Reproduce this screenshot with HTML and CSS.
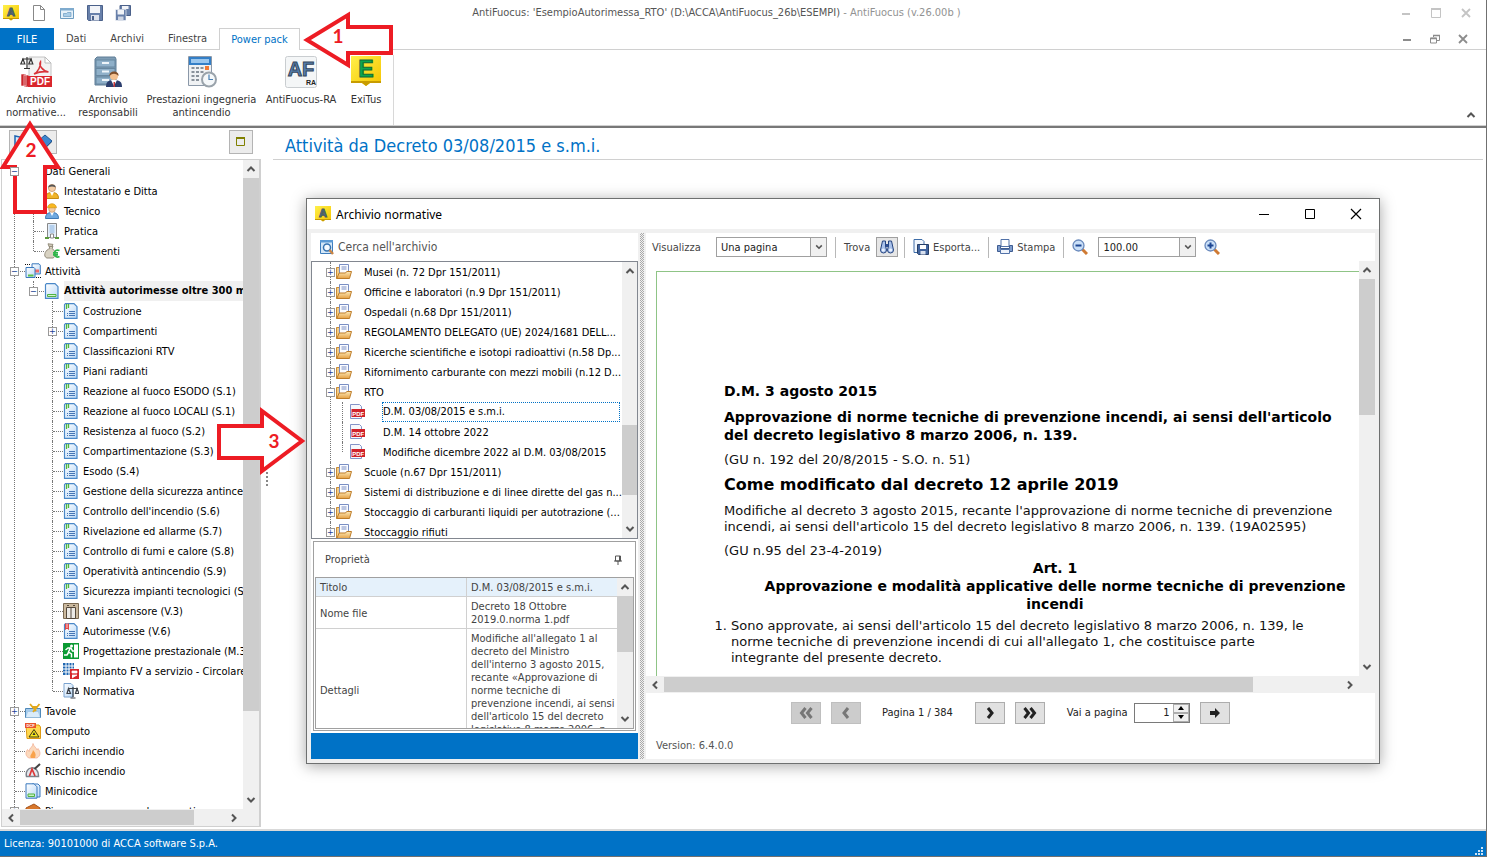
FILE: index.html
```html
<!DOCTYPE html>
<html lang="it">
<head>
<meta charset="utf-8">
<title>AntiFuocus</title>
<meta name="viewport" content="width=device-width, initial-scale=1">
<link rel="stylesheet" href="styles.css">
</head>
<body>
<svg class="defs" aria-hidden="true">
  <defs>
    <linearGradient id="gy" x1="0" y1="0" x2="1" y2="1"><stop offset="0" stop-color="#fff04a"/><stop offset="1" stop-color="#f5c400"/></linearGradient>
    <linearGradient id="gb" x1="0" y1="0" x2="1" y2="1"><stop offset="0" stop-color="#ffffff"/><stop offset="1" stop-color="#b9d8f7"/></linearGradient>
    <linearGradient id="gf" x1="0" y1="0" x2="0" y2="1"><stop offset="0" stop-color="#fdeab8"/><stop offset="1" stop-color="#e5a144"/></linearGradient>
  </defs>
  <symbol id="up" viewBox="0 0 10 10"><path d="M1.5 7 5 3.5 8.500 7" fill="none" stroke="#555" stroke-width="2"/></symbol>
  <symbol id="down" viewBox="0 0 10 10"><path d="M1.500 3 5 6.500 8.500 3" fill="none" stroke="#555" stroke-width="2"/></symbol>
  <symbol id="left" viewBox="0 0 10 10"><path d="M7 1.500 3.500 5 7 8.500" fill="none" stroke="#555" stroke-width="2"/></symbol>
  <symbol id="right" viewBox="0 0 10 10"><path d="M3 1.500 6.500 5 3 8.500" fill="none" stroke="#555" stroke-width="2"/></symbol>
  <symbol id="logo" viewBox="0 0 16 16"><path d="M0 0h16v14H10l-2 1.500L6 14H0z" fill="url(#gy)"/><path d="M0 14h6l2 1.500L10 14h6v-1H0z" fill="#c79a00"/><text x="8" y="11" class="la">A</text></symbol>
  <symbol id="newfile" viewBox="0 0 16 16"><path d="M2.500.5h7l4 4v11h-11zM9.500.5v4h4" fill="#fff" stroke="#888"/></symbol>
  <symbol id="openwin" viewBox="0 0 16 16"><path d="M1.500 3.500h13v10h-13z" fill="#e6f1f9" stroke="#6d9cc0"/><path d="M1 3h14v2.500H1z" fill="#7fabce"/><path d="M4.500 11.500v-3h3l1-1h3.500v4z" fill="#a8cde8" stroke="#6d9cc0" stroke-width=".7"/></symbol>
  <symbol id="save" viewBox="0 0 16 16"><path d="M.5.5h15v15h-14l-1-1z" fill="#6880aa" stroke="#4b618a"/><path d="M3 1h10v7H3z" fill="#f2f4f8"/><path d="M4 10h8v5.500H4z" fill="#dde2ec"/><path d="M5 11h2v4H5z" fill="#4b618a"/></symbol>
  <symbol id="saveall" viewBox="0 0 16 16"><path d="M5 .5h10.500v10H5z" fill="#6880aa" stroke="#4b618a"/><path d="M7 1h6.500v3H7z" fill="#f2f4f8"/><path d="M.5 4.500H11v11H.5z" fill="#6880aa" stroke="#fff" stroke-width=".6"/><path d="M2.500 5h6.500v4.500H2.500z" fill="#f2f4f8"/><path d="M3 11.500h5.500v4H3z" fill="#cfd6e4"/></symbol>
  <symbol id="user" viewBox="0 0 16 16"><path d="M1.500 15.500c0-4 2-6 6.500-6s6.500 2 6.500 6z" fill="#f0b429" stroke="#c68a12"/><path d="M6 9l2 4 2-4z" fill="#fff"/><circle cx="8" cy="5" r="3.600" fill="#f3cda6" stroke="#b98252" stroke-width=".6"/><path d="M4.300 4.500C4 .5 12 .5 11.700 4.500 9 3 7 3 4.300 4.500z" fill="#555"/></symbol>
  <symbol id="worker" viewBox="0 0 16 16"><path d="M1.500 15.500c0-4 2-6 6.500-6s6.500 2 6.500 6z" fill="#6fa9e0" stroke="#3f79b5"/><path d="M6 9l2 4 2-4z" fill="#fff"/><circle cx="8" cy="6" r="3.300" fill="#f3cda6" stroke="#b98252" stroke-width=".6"/><path d="M3.500 4.800C4-.7 12-.7 12.500 4.800z" fill="#f8b820" stroke="#c98d0c" stroke-width=".6"/></symbol>
  <symbol id="building" viewBox="0 0 16 16"><path d="M3.500.5h9v14h-9z" fill="#e3eefa" stroke="#888"/><path d="M5.500 3h5M5.500 5h5M5.500 7h5M5.500 9h5" stroke="#88b2df"/><path d="M6.500 15v-4h3v4z" fill="#fff" stroke="#888"/><path d="M1 15h4M11 15h4" stroke="#5a9a3c" stroke-width="2"/></symbol>
  <symbol id="money" viewBox="0 0 16 16"><path d="M5 3.500h4L8 5.500c4 2 4 8.500 1 9.500H3c-4-1-2.500-8 3-9.500zM4 .8l5 .6-1 2H5z" fill="#d8d2c2" stroke="#938d7c"/><path d="M15.500 7.500c-3.500-1.500-5 1-5 3.200s2 4.300 5 2.800M9 9.800h5M9 11.800h5" fill="none" stroke="#2fb54a" stroke-width="1.700"/></symbol>
  <symbol id="multidoc" viewBox="0 0 16 16"><path d="M7 .8h7l1.300 1.400V11H7z" fill="url(#gb)" stroke="#3a79be"/><path d="M10 8h4" stroke="#f06a6a" stroke-width="3"/><path d="M1 4.500h8l1 1.200V14.500H1z" fill="url(#gb)" stroke="#3a79be"/><path d="M3 12.500h5.500" stroke="#5bc04b" stroke-width="2"/><path d="M0 1.500h6M11 14.500h5" stroke="#111" stroke-dasharray="1 1"/></symbol>
  <symbol id="greendoc" viewBox="0 0 16 16"><path d="M2.500.7h8.500l3 3v11.600H1.500V1.700z" fill="url(#gb)" stroke="#4a88c8" stroke-width="1.200"/><path d="M3.500 11.500h8.500v2H3.500z" fill="#d5f3ce" stroke="#4fb242"/></symbol>
  <symbol id="doc" viewBox="0 0 16 16"><path d="M2.500.7h8.500l3 3v11.600H1.500V1.700z" fill="url(#gb)" stroke="#4a88c8" stroke-width="1.200"/><path d="M6 8.500h6M6 10.500h6M6 12.500h6" stroke="#3569ad" stroke-width=".9"/><path d="M4 10.500h1M4 12.500h1" stroke="#3569ad" stroke-width=".9"/><path d="M3.500 1v5M5.500 1v4" stroke="#50b83c" stroke-width="1.300"/></symbol>
  <symbol id="reddoc" viewBox="0 0 16 16"><path d="M2.500.7h8.500l3 3v11.600H1.500V1.700z" fill="url(#gb)" stroke="#4a88c8" stroke-width="1.200"/><path d="M6 8.500h6M6 10.500h6M6 12.500h6M4 10.500h1M4 12.500h1" stroke="#3569ad" stroke-width=".9"/><path d="M2.500.5v6l1.500-1.500 1.500 1.500v-6" fill="#f58d8d" stroke="#e04848"/></symbol>
  <symbol id="lift" viewBox="0 0 16 16"><path d="M.5.5h15v15H.5z" fill="#cbb99e" stroke="#7b6a52"/><path d="M3.500 4.500h9v11h-9zM8 4.500v11" fill="#eceae6" stroke="#54493c"/><path d="M4 2.500h2M10 2.500h2" stroke="#54493c"/></symbol>
  <symbol id="exit" viewBox="0 0 16 16"><path d="M0 0h16v16H0z" fill="#0b9a33"/><path d="M11 1.500h4v13h-4z" fill="#fff"/><circle cx="8.500" cy="3" r="1.500" fill="#fff"/><path d="M2.500 7l2.500-2h3l1.500 3h2M7 5.500 5.500 9l3 2v3.500M5.500 9.500 4 12H1" fill="none" stroke="#fff" stroke-width="1.500"/></symbol>
  <symbol id="solar" viewBox="0 0 16 16"><path d="M0 0h11v12H0z" fill="#1f67b1"/><path d="M0 3h11M0 6h11M0 9h11M3 0v12M6 0v12M9 0v12" stroke="#fff"/><path d="M7 6h9v10H7z" fill="#d7262c"/><path d="M9 8h5v2H9zM9 12h5l-5 3" fill="#fff" stroke="#fff" stroke-width=".7"/></symbol>
  <symbol id="law" viewBox="0 0 16 16"><path d="M1 .5h7l2 2V14H1z" fill="url(#gb)" stroke="#7aa3d0"/><path d="M10 4v10M5 5.500h10M7.500 15h5M5.500 5.500l-1.500 5h3.500zM14 5.500l-1.500 5H16z" fill="none" stroke="#3c4148" stroke-width="1.200"/></symbol>
  <symbol id="tavole" viewBox="0 0 16 16"><path d="M.5 5.500h15v9H.500z" fill="#a5cbeb" stroke="#4f88b8"/><path d="M3 9h10l2 5.500H1z" fill="#d9ebfa"/><path d="M5 1l6 7M14.500 1 8 9M7 4h5" stroke="#e2a81a" stroke-width="1.800"/></symbol>
  <symbol id="computo" viewBox="0 0 16 16"><path d="M1 2h13l1.500 2v11.500H2z" fill="#ffd84f" stroke="#dd9a13"/><path d="M0 0h11v5H0z" fill="#e9532b"/><text x="5.500" y="4.300" class="dcf">DCF</text><path d="M9 6.500 14 14H4z" fill="#f9ea1c" stroke="#3d3a10"/><path d="M7.500 12l1.500-3 1.500 3z" fill="#333"/></symbol>
  <symbol id="flame" viewBox="0 0 16 16"><path d="M8 .5c1 3.500 3.500 4 4 6.500l1-1.500c3 4 2.500 7.500-1 9.500H4C.5 13.500 0 9.500 2.500 6.500L4 8.500C4 5 8 4 8 .5z" fill="#fbd9bd" stroke="#f0a98d" stroke-width=".7"/><path d="M8 7c2 2.500 3.500 4 2 8H6c-2-2.500 1.500-4.500 2-8z" fill="#f9a24b"/></symbol>
  <symbol id="risk" viewBox="0 0 16 16"><path d="M1.500 13.500C-1 3 14 1 13.500 13.500z" fill="#e4e8ee" stroke="#7c828a" stroke-width="1.500"/><path d="M4.500 13 7 6l3 7" fill="none" stroke="#dc3838" stroke-width="1.700"/><path d="M9.500 6 15 1" stroke="#444" stroke-width="2"/></symbol>
  <symbol id="mini" viewBox="0 0 16 16"><path d="M7 1h6l2 2v11H7z" fill="url(#gb)" stroke="#3a79be"/><path d="M1 .8h8l3 3v11.400H1z" fill="url(#gb)" stroke="#3a79be"/><path d="M3 11h6.500v2.500H3z" fill="#c8f0c0" stroke="#4fb242"/></symbol>
  <symbol id="box" viewBox="0 0 16 16"><path d="M1 5 9 1l6 4v8l-7 3-7-3z" fill="#d8772b" stroke="#a4521a"/></symbol>
  <symbol id="folder" viewBox="0 0 16 16"><path d="M.5 3.500h3v11h-3z" fill="#f3cd88" stroke="#c98a35"/><path d="M3.500.5h9v10h-9z" fill="#fbfcff" stroke="#7a8fc4"/><path d="M5.500 3h5M5.500 5h5" stroke="#7a8fc4"/><path d="M.8 14.500 3.200 9H9.500l1.200-1.500h4.800L13.500 14.500z" fill="url(#gf)" stroke="#bd7c28"/></symbol>
  <symbol id="pdf" viewBox="0 0 16 16"><path d="M1.500.5h9l2 2v12h-11z" fill="#f7f9fd" stroke="#8594c8"/><path d="M2.500 5H16v8H2.500z" fill="#d0232b"/><text x="9.200" y="11.500" class="pdft">PDF</text></symbol>
  <symbol id="search" viewBox="0 0 16 16"><path d="M1.500 1.500h12v13h-12z" fill="#d4e7f7" stroke="#3d7dbd"/><path d="M1 1h13v2.500H1z" fill="#5b9ad5"/><circle cx="8" cy="8.500" r="3.500" fill="#f4faff" stroke="#3673b0" stroke-width="1.500"/><path d="M10.500 11l3.500 4" stroke="#c98545" stroke-width="2.500"/></symbol>
  <symbol id="bino" viewBox="0 0 16 16"><path d="M3.500 2h3v5l1 4a3 3 0 1 1-6 0zM9.500 2h3l2 9a3 3 0 1 1-6 0l1-4z" fill="#a9c1ea" stroke="#24437f"/><path d="M6.500 5h3v3h-3z" fill="#2f4f91"/><circle cx="4.300" cy="11" r="1.600" fill="#e9f1ff"/><circle cx="11.600" cy="11" r="1.600" fill="#e9f1ff"/></symbol>
  <symbol id="export" viewBox="0 0 16 16"><path d="M1 .5h8l2 2v11H1z" fill="#f2f7fd" stroke="#3e6da8"/><path d="M4.500 5.500h11v10h-10l-1-1z" fill="#41649e" stroke="#263f69"/><path d="M7 6h6v4H7z" fill="#fff"/><path d="M7.500 12h5v3.500h-5z" fill="#d8e0ee"/></symbol>
  <symbol id="print" viewBox="0 0 16 16"><path d="M4 .5h8v7H4z" fill="#fff" stroke="#5272a8"/><path d="M.5 6.500h3v3h9v-3h3v6h-15z" fill="#7f9dcd" stroke="#3e5c91"/><path d="M3.500 10.500h9v4h-9z" fill="#eef3fb" stroke="#5272a8"/></symbol>
  <symbol id="zout" viewBox="0 0 16 16"><path d="M10 10l5 5" stroke="#cf7a33" stroke-width="3"/><circle cx="6.500" cy="6.500" r="5.500" fill="#c9dff8" stroke="#6a8abc" stroke-width="1.300"/><path d="M3.500 6.500h6" stroke="#1d4794" stroke-width="2"/></symbol>
  <symbol id="zin" viewBox="0 0 16 16"><path d="M10 10l5 5" stroke="#cf7a33" stroke-width="3"/><circle cx="6.500" cy="6.500" r="5.500" fill="#c9dff8" stroke="#6a8abc" stroke-width="1.300"/><path d="M3.500 6.500h6M6.500 3.500v6" stroke="#1d4794" stroke-width="2"/></symbol>
  <symbol id="min" viewBox="0 0 10 10"><path d="M1 6h8" stroke="currentColor" stroke-width="2"/></symbol>
  <symbol id="max" viewBox="0 0 10 10"><path d="M.5 1v8.500h9V1" fill="none" stroke="currentColor"/><path d="M0 1h10" stroke="currentColor" stroke-width="2"/></symbol>
  <symbol id="restore" viewBox="0 0 10 10"><path d="M3.500 3V1.500h6v5H7M.5 4h6v5h-6z" fill="none" stroke="currentColor"/><path d="M3 1.500h7M0 4.500h7" stroke="currentColor" stroke-width="1.500"/></symbol>
  <symbol id="close" viewBox="0 0 10 10"><path d="M1 1l8 8M9 1 1 9" stroke="currentColor" stroke-width="1.800"/></symbol>
</svg>

<div class="app">
  <header class="titlebar">
    <div class="quick">
      <svg class="ic"><use href="#logo"/></svg>
      <button aria-label="Nuovo"><svg class="ic"><use href="#newfile"/></svg></button>
      <button aria-label="Apri"><svg class="ic"><use href="#openwin"/></svg></button>
      <button aria-label="Salva"><svg class="ic"><use href="#save"/></svg></button>
      <button aria-label="Salva tutto"><svg class="ic"><use href="#saveall"/></svg></button>
    </div>
    <div class="apptitle">AntiFuocus: 'EsempioAutorimessa_RTO' (D:\ACCA\AntiFuocus_26b\ESEMPI) <span>- AntiFuocus (v.26.00b )</span></div>
    <div class="winbtns pale">
      <button aria-label="Riduci"><svg><use href="#min"/></svg></button>
      <button aria-label="Ingrandisci"><svg><use href="#max"/></svg></button>
      <button aria-label="Chiudi"><svg><use href="#close"/></svg></button>
    </div>
  </header>
  <nav class="tabs">
    <button class="file">FILE</button>
    <button>Dati</button>
    <button>Archivi</button>
    <button>Finestra</button>
    <button class="on">Power pack</button>
    <div class="winbtns">
      <button aria-label="Riduci documento"><svg><use href="#min"/></svg></button>
      <button aria-label="Ripristina documento"><svg><use href="#restore"/></svg></button>
      <button aria-label="Chiudi documento"><svg><use href="#close"/></svg></button>
    </div>
  </nav>
  <div class="ribbon">
    <div class="group">
      <button class="cmd w72">
        <svg viewBox="0 0 32 32"><path d="M1 18h5v12H1zM4 19h5v12H4z" fill="#c9252b" stroke="#fff" stroke-width=".6"/><path d="M9 1h16l6 6v14H9z" fill="#f3f3f3" stroke="#c4c4c4"/><path d="M25 1v6h6z" fill="#fff" stroke="#bbb"/><path d="M14 18c4-2 7-8 6.500-12-2 3 2 9 8 10-5-1-10 0-14.500 2z" fill="none" stroke="#d8343a" stroke-width="1.600"/><path d="M8 20h24v11H8z" fill="#d9262c"/><text x="20" y="29" class="pdfbig">PDF</text><path d="M7 1v11M2 3h10M4 12.500h6M3 3 .8 8h4zM11 3 8.800 8h4z" fill="none" stroke="#333" stroke-width="1.200"/></svg>
        <span>Archivio<br>normative...</span></button>
      <button class="cmd w72">
        <svg viewBox="0 0 32 32"><path d="M3 3l2-2h18l1 2v26H3z" fill="#7f9db5" stroke="#5e7d96"/><path d="M4 4h19v7H4zM4 12.500h19v7H4zM4 21h19v7H4z" fill="#8fb0c9" stroke="#6787a0"/><path d="M10 7h7M10 15.500h7M10 24h7" stroke="#eef5fa" stroke-width="2"/><path d="M14 31c0-5 2-7 8-7s8 2 8 7z" fill="#2c3e6e"/><path d="M19 24l3 6 3-6z" fill="#fff"/><path d="M21.500 26h1.500v5h-1.500z" fill="#c93434"/><circle cx="22" cy="20" r="4" fill="#f4c190"/><path d="M17.500 20c-1-6 10-6 9 0-3-3-6-3-9 0z" fill="#80502c"/></svg>
        <span>Archivio<br>responsabili</span></button>
      <button class="cmd w115">
        <svg viewBox="0 0 32 32"><path d="M2.500.5h23v29h-23z" fill="#f0f2f4" stroke="#8b98a8"/><path d="M3 1h22v8H3z" fill="#347fc7"/><path d="M5 3h18v4H5z" fill="#9bc7ee"/><path d="M5.500 11h3v2h-3zM10 11h3v2h-3zM14.500 11h3v2h-3zM5.500 15h3v2h-3zM10 15h3v2h-3zM14.500 15h3v2h-3zM5.500 19h3v2h-3zM10 19h3v2h-3zM5.500 23h3v2h-3zM10 23h3v2h-3z" fill="#8a929b"/><path d="M19 10h4v4h-4z" fill="#f27a35"/><circle cx="23" cy="23.500" r="7" fill="#f5f8fa" stroke="#9aa3ab" stroke-width="2"/><path d="M23 18.500v5h4" fill="none" stroke="#4880b5" stroke-width="1.200"/></svg>
        <span>Prestazioni ingegneria<br>antincendio</span></button>
      <button class="cmd w86">
        <svg viewBox="0 0 32 32"><rect x=".5" y=".5" width="31" height="31" rx="2" fill="#f4f6f7" stroke="#c9cdd0"/><text x="16" y="20" class="af">AF</text><text x="26" y="29" class="ra">RA</text></svg>
        <span>AntiFuocus-RA</span></button>
      <button class="cmd w46">
        <svg viewBox="0 0 32 32"><path d="M1 0h30v27H20l-4 3-4-3H1z" fill="url(#gy)"/><path d="M1 27h11l4 3 4-3h11v-2H1z" fill="#c89c00"/><text x="16" y="21" class="ee">E</text></svg>
        <span>ExiTus</span></button>
    </div>
    <button class="collapse" aria-label="Comprimi barra"><svg class="ar"><use href="#up"/></svg></button>
  </div>

  <div class="work">
    <aside class="side">
      <div class="sidebar-tools">
        <button aria-label="Libro"><svg class="ic" viewBox="0 0 16 16"><path d="M2 2v10l5 1V3z" fill="#d5e8fa" stroke="#1d66b3" stroke-width="1.500"/></svg></button>
        <button aria-label="Archivio"><svg class="ic" viewBox="0 0 16 16"><path d="M1 7 8 1l7 6-6 6z" fill="#3d87cf" stroke="#1f5795"/><path d="M2 9l7 5 6-6" fill="none" stroke="#9aa6b2"/></svg></button>
        <button class="pushr" aria-label="Pannello"><svg class="ic" viewBox="0 0 16 16"><path d="M3.500 4v7.500h8V4" fill="none" stroke="#808000"/><path d="M3 4h9" stroke="#808000" stroke-width="2"/></svg></button>
      </div>
      <div class="treebox">
        <div class="scrollrow">
          <ul class="tree main">
            <li><div class="row"><button class="ex">−</button><svg class="ic"><use href="#greendoc"/></svg>Dati Generali</div>
              <ul>
                <li><div class="row"><i></i><svg class="ic"><use href="#user"/></svg>Intestatario e Ditta</div></li>
                <li><div class="row"><i></i><svg class="ic"><use href="#worker"/></svg>Tecnico</div></li>
                <li><div class="row"><i></i><svg class="ic"><use href="#building"/></svg>Pratica</div></li>
                <li><div class="row"><i></i><svg class="ic"><use href="#money"/></svg>Versamenti</div></li>
              </ul></li>
            <li><div class="row"><button class="ex">−</button><svg class="ic"><use href="#multidoc"/></svg>Attività</div>
              <ul>
                <li><div class="row"><button class="ex">−</button><svg class="ic"><use href="#greendoc"/></svg><b>Attività autorimesse oltre 300 mq</b></div>
                  <ul>
                    <li><div class="row"><i></i><svg class="ic"><use href="#doc"/></svg>Costruzione</div></li>
                    <li><div class="row"><button class="ex">+</button><svg class="ic"><use href="#doc"/></svg>Compartimenti</div></li>
                    <li><div class="row"><i></i><svg class="ic"><use href="#doc"/></svg>Classificazioni RTV</div></li>
                    <li><div class="row"><i></i><svg class="ic"><use href="#doc"/></svg>Piani radianti</div></li>
                    <li><div class="row"><i></i><svg class="ic"><use href="#doc"/></svg>Reazione al fuoco ESODO (S.1)</div></li>
                    <li><div class="row"><i></i><svg class="ic"><use href="#doc"/></svg>Reazione al fuoco LOCALI (S.1)</div></li>
                    <li><div class="row"><i></i><svg class="ic"><use href="#doc"/></svg>Resistenza al fuoco (S.2)</div></li>
                    <li><div class="row"><i></i><svg class="ic"><use href="#doc"/></svg>Compartimentazione (S.3)</div></li>
                    <li><div class="row"><i></i><svg class="ic"><use href="#doc"/></svg>Esodo (S.4)</div></li>
                    <li><div class="row"><i></i><svg class="ic"><use href="#doc"/></svg>Gestione della sicurezza antincendio</div></li>
                    <li><div class="row"><i></i><svg class="ic"><use href="#doc"/></svg>Controllo dell'incendio (S.6)</div></li>
                    <li><div class="row"><i></i><svg class="ic"><use href="#doc"/></svg>Rivelazione ed allarme (S.7)</div></li>
                    <li><div class="row"><i></i><svg class="ic"><use href="#doc"/></svg>Controllo di fumi e calore (S.8)</div></li>
                    <li><div class="row"><i></i><svg class="ic"><use href="#doc"/></svg>Operatività antincendio (S.9)</div></li>
                    <li><div class="row"><i></i><svg class="ic"><use href="#doc"/></svg>Sicurezza impianti tecnologici (S.10)</div></li>
                    <li><div class="row"><i></i><svg class="ic"><use href="#lift"/></svg>Vani ascensore (V.3)</div></li>
                    <li><div class="row"><i></i><svg class="ic"><use href="#reddoc"/></svg>Autorimesse (V.6)</div></li>
                    <li><div class="row"><i></i><svg class="ic"><use href="#exit"/></svg>Progettazione prestazionale (M.3)</div></li>
                    <li><div class="row"><i></i><svg class="ic"><use href="#solar"/></svg>Impianto FV a servizio - Circolare</div></li>
                    <li><div class="row"><i></i><svg class="ic"><use href="#law"/></svg>Normativa</div></li>
                  </ul></li>
              </ul></li>
            <li><div class="row"><button class="ex">+</button><svg class="ic"><use href="#tavole"/></svg>Tavole</div></li>
            <li><div class="row"><i></i><svg class="ic"><use href="#computo"/></svg>Computo</div></li>
            <li><div class="row"><i></i><svg class="ic"><use href="#flame"/></svg>Carichi incendio</div></li>
            <li><div class="row"><i></i><svg class="ic"><use href="#risk"/></svg>Rischio incendio</div></li>
            <li><div class="row"><i></i><svg class="ic"><use href="#mini"/></svg>Minicodice</div></li>
            <li><div class="row"><button class="ex">+</button><svg class="ic"><use href="#box"/></svg>Piano emergenza e documenti</div></li>
          </ul>
          <div class="vs"><svg class="ar"><use href="#up"/></svg><div class="track"><div class="thumb t-side"></div></div><svg class="ar"><use href="#down"/></svg></div>
        </div>
        <div class="hs"><svg class="ar"><use href="#left"/></svg><div class="track"><div class="thumb h-side"></div></div><svg class="ar"><use href="#right"/></svg></div>
      </div>
    </aside>
    <div class="split"><span></span></div>
    <main class="content"><h1>Attività da Decreto 03/08/2015 e s.m.i.</h1></main>
  </div>
  <footer class="status"><span>Licenza: 90101000 di ACCA software S.p.A.</span>
    <svg viewBox="0 0 9 9"><path d="M7 1h2M4 4h2M7 4h2M1 7h2M4 7h2M7 7h2" stroke="#cfe3f4" stroke-width="2"/></svg></footer>

  <section class="dialog" role="dialog" aria-label="Archivio normative">
    <div class="dtitle"><svg class="ic"><use href="#logo"/></svg><span>Archivio normative</span>
      <button aria-label="Riduci finestra"><svg viewBox="0 0 12 12"><path d="M1 6.500h10" stroke="#000"/></svg></button>
      <button aria-label="Ingrandisci finestra"><svg viewBox="0 0 12 12"><path d="M1.500 1.500h9v9h-9z" fill="none" stroke="#000"/></svg></button>
      <button aria-label="Chiudi finestra"><svg viewBox="0 0 12 12"><path d="M1 1l10 10M11 1 1 11" stroke="#000" stroke-width="1.200"/></svg></button>
    </div>
    <div class="dbody">
      <div class="archive">
        <button class="find"><svg class="ic"><use href="#search"/></svg>Cerca nell'archivio</button>
        <div class="listbox">
          <ul class="tree arch">
            <li><div class="row"><button class="ex">+</button><svg class="ic"><use href="#folder"/></svg><span>Musei (n. 72 Dpr 151/2011)</span></div></li>
            <li><div class="row"><button class="ex">+</button><svg class="ic"><use href="#folder"/></svg><span>Officine e laboratori (n.9 Dpr 151/2011)</span></div></li>
            <li><div class="row"><button class="ex">+</button><svg class="ic"><use href="#folder"/></svg><span>Ospedali (n.68 Dpr 151/2011)</span></div></li>
            <li><div class="row"><button class="ex">+</button><svg class="ic"><use href="#folder"/></svg><span>REGOLAMENTO DELEGATO (UE) 2024/1681 DELL...</span></div></li>
            <li><div class="row"><button class="ex">+</button><svg class="ic"><use href="#folder"/></svg><span>Ricerche scientifiche e isotopi radioattivi (n.58 Dp...</span></div></li>
            <li><div class="row"><button class="ex">+</button><svg class="ic"><use href="#folder"/></svg><span>Rifornimento carburante con mezzi mobili (n.12 D...</span></div></li>
            <li><div class="row"><button class="ex">−</button><svg class="ic"><use href="#folder"/></svg><span>RTO</span></div>
              <ul>
                <li><div class="row"><i></i><svg class="ic"><use href="#pdf"/></svg><span class="sel">D.M. 03/08/2015 e s.m.i.</span></div></li>
                <li><div class="row"><i></i><svg class="ic"><use href="#pdf"/></svg><span>D.M. 14 ottobre 2022</span></div></li>
                <li><div class="row"><i></i><svg class="ic"><use href="#pdf"/></svg><span>Modifiche dicembre 2022 al D.M. 03/08/2015</span></div></li>
              </ul></li>
            <li><div class="row"><button class="ex">+</button><svg class="ic"><use href="#folder"/></svg><span>Scuole (n.67 Dpr 151/2011)</span></div></li>
            <li><div class="row"><button class="ex">+</button><svg class="ic"><use href="#folder"/></svg><span>Sistemi di distribuzione e di linee dirette del gas n...</span></div></li>
            <li><div class="row"><button class="ex">+</button><svg class="ic"><use href="#folder"/></svg><span>Stoccaggio di carburanti liquidi per autotrazione (...</span></div></li>
            <li><div class="row"><button class="ex">+</button><svg class="ic"><use href="#folder"/></svg><span>Stoccaggio rifiuti</span></div></li>
          </ul>
          <div class="vs"><svg class="ar"><use href="#up"/></svg><div class="track"><div class="thumb t-list"></div></div><svg class="ar"><use href="#down"/></svg></div>
        </div>
        <div class="props">
          <div class="phead"><span>Proprietà</span><svg viewBox="0 0 10 10"><path d="M2.500 1h5v5h-5z" fill="none" stroke="#555"/><path d="M6 1h2v5H6z" fill="#555"/><path d="M1 6h8M5 6v4" stroke="#555"/></svg></div>
          <div class="pgrid">
            <div class="pclip">
              <table>
                <tr class="hot"><th>Titolo</th><td>D.M. 03/08/2015 e s.m.i.</td></tr>
                <tr><th>Nome file</th><td>Decreto 18 Ottobre<br>2019.0.norma 1.pdf</td></tr>
                <tr><th>Dettagli</th><td>Modifiche all'allegato 1 al<br>decreto del Ministro<br>dell'interno 3 agosto 2015,<br>recante «Approvazione di<br>norme tecniche di<br>prevenzione incendi, ai sensi<br>dell'articolo 15 del decreto<br>legislativo 8 marzo 2006, n.<br>139»</td></tr>
              </table>
            </div>
            <div class="vs"><svg class="ar"><use href="#up"/></svg><div class="track"><div class="thumb t-prop"></div></div><svg class="ar"><use href="#down"/></svg></div>
          </div>
        </div>
        <div class="bluebar"></div>
      </div>
      <div class="dsplit"></div>
      <div class="viewer">
        <div class="vtools">
          <label for="view">Visualizza</label>
          <span class="combo c1"><select id="view"><option>Una pagina</option></select><span><svg class="ar"><use href="#down"/></svg></span></span>
          <hr><span class="lbl">Trova</span>
          <button class="framed" aria-label="Trova"><svg class="ic"><use href="#bino"/></svg></button>
          <hr><button class="tb"><svg class="ic"><use href="#export"/></svg>Esporta...</button>
          <hr><button class="tb"><svg class="ic"><use href="#print"/></svg>Stampa</button>
          <hr><button class="tb" aria-label="Riduci zoom"><svg class="ic"><use href="#zout"/></svg></button>
          <span class="combo c2"><select aria-label="Zoom"><option>100.00</option></select><span><svg class="ar"><use href="#down"/></svg></span></span>
          <button class="tb" aria-label="Aumenta zoom"><svg class="ic"><use href="#zin"/></svg></button>
        </div>
        <div class="page-area">
          <article class="sheet">
            <div class="body">
              <h2>D.M. 3 agosto 2015</h2>
              <h2>Approvazione di norme tecniche di prevenzione incendi, ai sensi dell'articolo<br>del decreto legislativo 8 marzo 2006, n. 139.</h2>
              <p>(GU n. 192 del 20/8/2015 - S.O. n. 51)</p>
              <h2 class="big">Come modificato dal decreto 12 aprile 2019</h2>
              <p>Modifiche al decreto 3 agosto 2015, recante l'approvazione di norme tecniche di prevenzione<br>incendi, ai sensi dell'articolo 15 del decreto legislativo 8 marzo 2006, n. 139. (19A02595)</p>
              <p class="tight">(GU n.95 del 23-4-2019)</p>
              <h2 class="art">Art. 1<br>Approvazione e modalità applicative delle norme tecniche di prevenzione<br>incendi</h2>
              <ol><li>Sono approvate, ai sensi dell'articolo 15 del decreto legislativo 8 marzo 2006, n. 139, le<br>norme tecniche di prevenzione incendi di cui all'allegato 1, che costituisce parte<br>integrante del presente decreto.</li></ol>
            </div>
          </article>
          <div class="vs"><svg class="ar"><use href="#up"/></svg><div class="track"><div class="thumb t-doc"></div></div><svg class="ar"><use href="#down"/></svg></div>
        </div>
        <div class="hs"><svg class="ar"><use href="#left"/></svg><div class="track"><div class="thumb h-doc"></div></div><svg class="ar"><use href="#right"/></svg></div>
        <div class="pager">
          <button disabled aria-label="Prima pagina"><svg viewBox="0 0 18 14"><path d="M8.500 2 4.500 7l4 5M14.500 2l-4 5 4 5" fill="none" stroke="#777" stroke-width="3"/></svg></button>
          <button disabled aria-label="Pagina precedente"><svg viewBox="0 0 18 14"><path d="M11 2 7 7l4 5" fill="none" stroke="#777" stroke-width="3"/></svg></button>
          <span class="count">Pagina 1 / 384</span>
          <button aria-label="Pagina successiva"><svg viewBox="0 0 18 14"><path d="M7 2l4 5-4 5" fill="none" stroke="#222" stroke-width="3"/></svg></button>
          <button aria-label="Ultima pagina"><svg viewBox="0 0 18 14"><path d="M3.500 2l4 5-4 5M9.500 2l4 5-4 5" fill="none" stroke="#222" stroke-width="3"/></svg></button>
          <label for="goto">Vai a pagina</label>
          <span class="spin"><input id="goto" type="number" value="1"><span><button aria-label="Su"><svg viewBox="0 0 6 4"><path d="M0 4l3-4 3 4z"/></svg></button><button aria-label="Giù"><svg viewBox="0 0 6 4"><path d="M0 0l3 4 3-4z"/></svg></button></span></span>
          <button aria-label="Vai"><svg viewBox="0 0 18 14"><path d="M4 5h5V2l5 5-5 5V9H4z" fill="#222"/></svg></button>
        </div>
        <div class="version">Version: 6.4.0.0</div>
      </div>
    </div>
  </section>

  <svg class="mark m1" viewBox="0 0 92 58"><path d="M4 29 45 4v12h43v26H45v12z"/><text x="35" y="32">1</text></svg>
  <svg class="mark m2" viewBox="0 0 62 96"><path d="M30 4l28 43H45v45H15V47H3z"/><text x="31" y="37">2</text></svg>
  <svg class="mark m3" viewBox="0 0 92 70"><path d="M4 20h43V5l40 30-40 30V52H4z"/><text x="59" y="42">3</text></svg>
</div>
</body>
</html>
```
FILE: styles.css
```css
* { box-sizing: border-box; }
body { margin: 0; }
body, button, input, select {
  font-family: "DejaVu Sans Condensed", "Noto Sans", sans-serif;
  font-size: 11px;
  color: #222;
}
button { border: 0; background: none; padding: 0; }
ul { list-style: none; margin: 0; padding: 0; }
svg { display: block; flex: none; }
.defs { position: absolute; width: 0; height: 0; }
.ic { width: 16px; height: 16px; }
.ar { width: 10px; height: 10px; }
symbol text, .cmd text { font-family: "Liberation Sans", sans-serif; font-weight: bold; text-anchor: middle; }

.app {
  position: relative;
  display: flex;
  flex-direction: column;
  height: 100vh;
  min-height: 500px;
  overflow: hidden;
  background: #fff;
  border-right: 1px solid #707070;
  border-bottom: 1px solid #707070;
}
.titlebar { display: flex; align-items: center; height: 25px; }
.quick { display: flex; gap: 12px; padding-left: 3px; width: 132px; }
.apptitle { flex: 1; text-align: center; margin-right: 100px; color: #555; white-space: nowrap; }
.apptitle span { color: #929292; }
.winbtns { display: flex; gap: 18px; width: 84px; color: #8c8c8c; }
.winbtns.pale { color: #c4c4c4; gap: 20px; width: 85px; }
.winbtns button { color: inherit; }
.winbtns svg { width: 10px; height: 10px; }

.tabs { display: flex; align-items: stretch; height: 25px; padding-top: 3px; border-bottom: 1px solid #d0d0d0; }
.tabs > button { padding: 0 12px; color: #444; }
.tabs .file { width: 54px; background: #0072c6; color: #fff; margin-bottom: -1px; }
.tabs .on { border: 1px solid #d0d0d0; border-bottom: 0; background: #fff; color: #0072c6; margin-bottom: -1px; padding: 0 11px; }
.tabs .winbtns { margin-left: auto; align-items: center; }

.ribbon { display: flex; justify-content: space-between; align-items: flex-end; height: 76px; border-bottom: 1px solid #d0d0d0; }
.group { display: flex; align-self: stretch; margin-top: 5px; border-right: 1px solid #d8d8d8; padding-right: 4px; }
.cmd { display: flex; flex-direction: column; align-items: center; gap: 5px; line-height: 13px; color: #333; padding-top: 1px; white-space: nowrap; }
.cmd svg { width: 32px; height: 32px; }
.w72 { width: 72px; }
.w115 { width: 115px; }
.w86 { width: 84px; }
.w46 { width: 46px; }
.cmd .af { font-size: 20px; fill: #557fae; stroke: #34465c; stroke-width: 1px; }
.cmd .ra { font-size: 7px; fill: #222; }
.cmd .ee { font-size: 23px; fill: #0ca64e; stroke: #126a36; stroke-width: 1px; }
.cmd .pdfbig { font-size: 10px; fill: #fff; }
.la { font-size: 11px; fill: #4a7fa8; stroke: #4b5b60; stroke-width: 1px; }
.dcf { font-size: 4px; fill: #fff; }
.pdft { font-size: 6px; fill: #fff; }
.collapse { margin: 0 10px 5px 0; }

.work { flex: 1; display: flex; min-height: 0; border-top: 2px solid #787878; border-bottom: 2px solid #d9d9d9; padding-top: 1px; }
.side { width: 261px; display: flex; flex-direction: column; }
.sidebar-tools { display: flex; height: 30px; padding: 1px 8px 0 9px; }
.sidebar-tools button { width: 24px; height: 24px; display: grid; place-items: center; background: #ececec; border: 1px solid #b4b4b4; }
.sidebar-tools .pushr { margin-left: auto; }
.treebox { flex: 1; min-height: 0; margin: 0 0 2px 1px; border: 1px solid #d0d0d0; border-right-width: 2px; display: flex; flex-direction: column; }
.scrollrow { flex: 1; display: flex; min-height: 0; }
.tree { flex: 1; min-width: 0; overflow: hidden; color: #000; }
.main { padding-top: 1px; }
.row { position: relative; display: flex; align-items: center; height: 20px; white-space: nowrap; }
.main .row { padding-left: 8px; }
.main .row > .ic { margin: 0 4px 0 6px; }
.main ul { padding-left: 19px; }
.row b { background: #f0f0f0; align-self: stretch; line-height: 20px; flex: 1; }
.row > i { width: 9px; flex: none; }
.ex { position: relative; z-index: 1; flex: none; width: 9px; height: 9px; border: 1px solid #999; background: #fff; color: #1c3f94; font-size: 9px; line-height: 7px; text-align: center; }
.tree li { position: relative; }
.tree li::before { content: ""; position: absolute; left: 12px; top: 0; bottom: 0; border-left: 1px dotted #777; }
.tree li:last-child::before { bottom: auto; height: 10px; }
.main .row::before { content: ""; position: absolute; left: 13px; top: 10px; width: 10px; border-top: 1px dotted #777; }

.vs { flex: none; width: 16px; background: #f0f0f0; display: flex; flex-direction: column; align-items: center; padding: 4px 0; }
.vs .track { flex: 1; align-self: stretch; padding: 4px 0; }
.hs { flex: none; height: 17px; background: #f0f0f0; display: flex; align-items: center; padding: 0 20px 0 4px; }
.hs .track { flex: 1; align-self: stretch; display: flex; padding: 1px 4px; }
.thumb { background: #cdcdcd; }
.vs .thumb { width: 100%; }
.t-side { height: 87%; }
.t-list { height: 29%; margin-top: 145px; }
.t-prop { height: 49%; }
.t-doc { height: 36%; }
.h-side { width: 85%; }
.h-doc { width: 87%; }

.split { width: 12px; display: grid; place-items: center; }
.split span { height: 14px; border-left: 2px dotted #888; }
.content { flex: 1; min-width: 0; padding-right: 3px; }
h1 { margin: 0; height: 31px; padding-left: 12px; line-height: 33px; font-size: 18px; font-weight: normal; color: #0072c6; border-bottom: 1px solid #d0d0d0; }
.status { display: flex; justify-content: space-between; align-items: center; height: 25px; padding: 0 3px 0 4px; background: #0072c6; color: #fff; }
.status svg { width: 9px; height: 9px; align-self: flex-end; }

.dialog {
  position: absolute;
  left: 306px;
  top: 198px;
  right: 106px;
  bottom: 92px;
  display: flex;
  flex-direction: column;
  background: #f0f0f0;
  border: 1px solid #6e7070;
  box-shadow: 0 2px 14px rgba(0, 0, 0, .35);
}
.dtitle { display: flex; align-items: center; height: 30px; padding: 0 17px 0 8px; background: #fff; color: #000; }
.dtitle > span { flex: 1; padding-left: 5px; font-family: "Noto Sans", sans-serif; font-size: 12px; }
.dtitle button { margin-left: 34px; }
.dtitle button svg { width: 12px; height: 12px; }
.dbody { flex: 1; min-height: 0; display: flex; padding: 4px; }
.archive { width: 327px; display: flex; flex-direction: column; background: #fff; }
.find { display: flex; align-items: center; gap: 3px; height: 28px; padding-left: 8px; font-size: 12px; color: #555; }
.listbox { flex: 1; min-height: 0; display: flex; border: 1px solid #828790; }
.listbox .vs { width: 15px; }
.arch .row { padding-left: 14px; }
.arch .row > .ic { margin: 0 12px 0 1px; }
.arch ul { padding-left: 12px; }
.arch li::before { left: 18px; }
.arch ul .row > .ic { margin: 0 18px 0 2px; }
.sel { flex: 1; height: 20px; line-height: 18px; border: 1px dotted #0072c6; margin: 0 2px 0 -1px; }
.props { height: 190px; margin: 2px; border: 1px solid #a0a0a0; padding: 0 1px 1px; display: flex; flex-direction: column; }
.phead { display: flex; justify-content: space-between; align-items: center; height: 35px; padding: 0 11px 0 10px; color: #444; }
.phead svg { width: 10px; height: 10px; }
.pgrid { flex: 1; min-height: 0; display: flex; border: 1px solid #a0a0a0; }
.pclip { flex: 1; overflow: hidden; }
table { width: 100%; border-collapse: collapse; table-layout: fixed; line-height: 13px; color: #444; }
th, td { text-align: left; font-weight: normal; border-bottom: 1px solid #d0d0d0; padding: 3px 4px 2px; white-space: nowrap; }
th { border-right: 1px solid #d0d0d0; }
.hot { background: #e5f1fb; }
.bluebar { height: 26px; background: #0072c6; }
.dsplit { width: 4px; margin: 0 2px; background: repeating-conic-gradient(#aaa 0 25%, #f0f0f0 0 50%) 0 0 / 2px 2px; }
.viewer { flex: 1; min-width: 0; display: flex; flex-direction: column; background: #fff; }
.vtools { display: flex; align-items: center; height: 28px; padding-left: 6px; color: #444; white-space: nowrap; }
.vtools label { width: 64px; }
.vtools hr { width: 1px; height: 21px; margin: 0 8px; border: 0; background: #b8b8b8; }
.combo { display: grid; height: 20px; border: 1px solid #a0a0a0; }
.combo select { grid-area: 1 / 1; appearance: none; border: 0; background: #fff; padding: 0 4px; border-radius: 0; width: 100%; }
.combo > span { grid-area: 1 / 1; justify-self: end; width: 16px; display: grid; place-items: center; background: #f0f0f0; border-left: 1px solid #a0a0a0; pointer-events: none; }
.combo .ar { width: 8px; height: 8px; }
.c1 { width: 111px; }
.c2 { width: 98px; margin: 0 8px 0 10px; }
.lbl { width: 32px; }
.framed { width: 22px; height: 20px; display: grid; place-items: center; border: 1px solid #a0a0a0; background: #e6e6e6; margin-right: -2px; }
.tb { display: flex; align-items: center; gap: 4px; color: #444; }
.page-area { flex: 1; min-height: 0; display: flex; }
.sheet { flex: 1; min-width: 0; overflow: hidden; margin: 10px 0 0 10px; border: 1px solid #8fc486; border-right: 0; border-bottom: 0; padding: 110px 0 0 67px; font-family: "DejaVu Sans", sans-serif; font-size: 13px; line-height: 16px; color: #111; }
.body { width: 662px; white-space: nowrap; }
h2 { margin: 0 0 8px; font-size: 14px; line-height: 18px; color: #000; }
.body p { margin: 0 0 8px; }
.body .big { font-size: 16px; margin-bottom: 9px; }
.body .tight { margin: 0; }
.art { text-align: center; margin: 0 0 5px; }
.body ol { margin: 0; padding-left: 7px; }
.pager { display: flex; align-items: center; height: 39px; padding-left: 145px; gap: 10px; }
.pager > button { width: 30px; height: 22px; display: grid; place-items: center; background: #e1e1e1; border: 1px solid #adadad; }
.pager > button:disabled { background: #ccc; border-color: #bfbfbf; }
.pager > button svg { width: 18px; height: 14px; }
.count { padding: 0 12px 0 11px; }
.pager label { margin: 0 -4px 0 12px; }
.spin { display: flex; width: 56px; height: 20px; border: 1px solid #7a7a7a; }
.spin input { flex: 1; min-width: 0; border: 0; text-align: right; appearance: textfield; padding: 0 3px; }
.spin input::-webkit-inner-spin-button { display: none; }
.spin > span { display: grid; width: 16px; }
.spin button { display: grid; place-items: center; border: 1px solid #adadad; background: #f0f0f0; }
.spin svg { width: 6px; height: 4px; }
.version { padding: 7px 10px; line-height: 13px; color: #555; }

.mark { position: absolute; fill: #fff; stroke: #ed1c24; stroke-width: 4px; pointer-events: none; }
.mark text { fill: #ed1c24; stroke: none; font: bold 19px Lato, sans-serif; text-anchor: middle; }
.m1 { left: 303px; top: 11px; width: 92px; height: 58px; }
.m2 { left: 0; top: 120px; width: 62px; height: 96px; }
.m3 { left: 215px; top: 406px; width: 92px; height: 70px; }
```
